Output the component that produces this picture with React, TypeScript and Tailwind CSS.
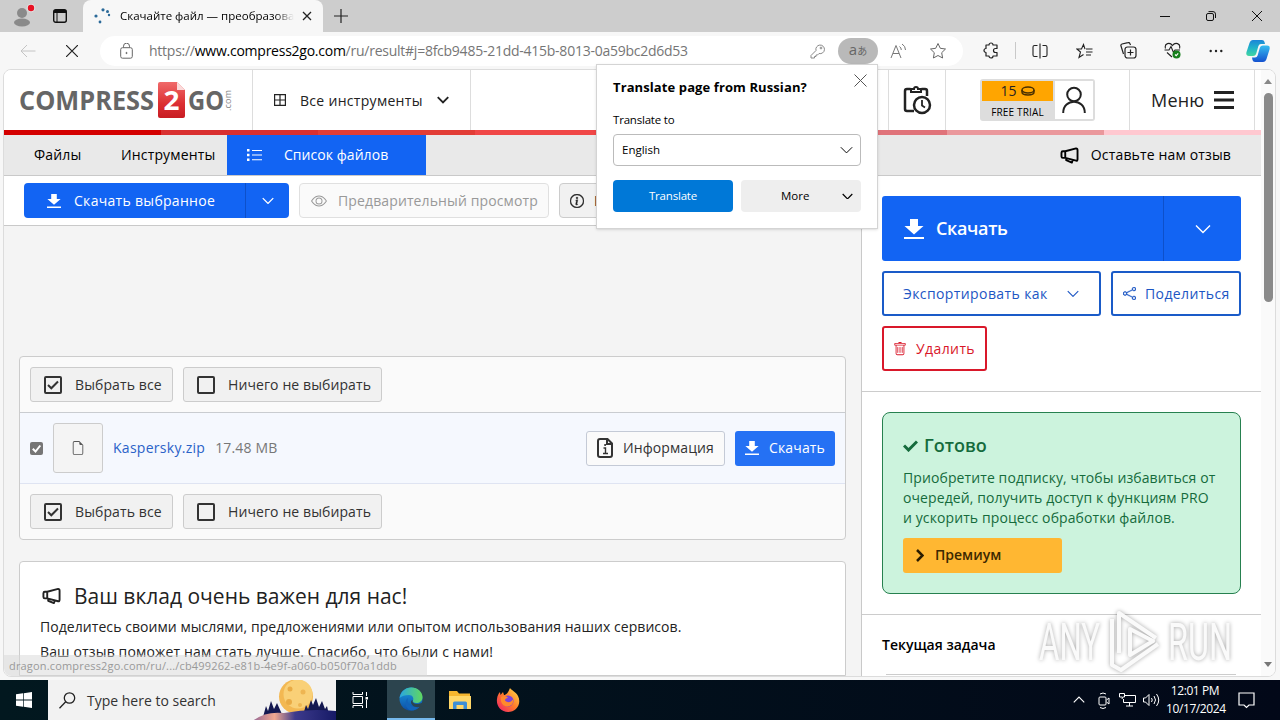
import React from 'react';
import { BsFileEarmark, BsShare, BsTrash, BsEye, BsInfoCircle } from 'react-icons/bs';

interface IconProps {
  className?: string;
}

const Chevron = ({ className }: IconProps) => (
  <svg viewBox="0 0 16 10" fill="none" stroke="currentColor" className={className}>
    <path d="M1 1.500 8 8.500 15 1.500" />
  </svg>
);

const Download = ({ className }: IconProps) => (
  <svg viewBox="0 0 20 20" fill="currentColor" className={className}>
    <path d="M6 0h8v7h5.500L10 15.500.5 7H6zM0 18h20v2.200H0z" />
  </svg>
);

const Megaphone = ({ className }: IconProps) => (
  <svg viewBox="0 0 20 18" fill="none" stroke="currentColor" strokeWidth="2" strokeLinejoin="round" className={className}>
    <path d="M5.500 4.500 17 1.500q1.500 0 1.500 2v9.500q0 1.800-1.500 1.500L5.500 11.500zM5.500 4.500H3Q1.500 4.500 1.500 6v4q0 1.500 1.500 1.500h2.500M6.500 12v2l6 2.500 1-2.800" />
  </svg>
);

const CheckSquare = ({ checked }: { checked: boolean }) => (
  <svg viewBox="0 0 18 18" fill="none" stroke="#333" strokeWidth="2" className="h-[18px] w-[18px] shrink-0">
    <rect x="1" y="1" width="16" height="16" rx="1" />
    {checked && <path d="m4 9 3.300 3.300L14 5.500" />}
  </svg>
);

const Logo = () => (
  <svg width="214" height="40" viewBox="0 0 214 40" fontFamily="Open Sans, sans-serif" fontWeight="700">
    <defs>
      <linearGradient id="doc" x2="0" y2="1">
        <stop offset="0" stopColor="#f06a6a" />
        <stop offset="0.6" stopColor="#dc2f33" />
        <stop offset="1" stopColor="#c81c22" />
      </linearGradient>
    </defs>
    <text x="-1" y="30" fontSize="27" fill="#666" textLength="135" lengthAdjust="spacingAndGlyphs">COMPRESS</text>
    <path d="M138 4q0-2 2-2h17l8 8v26q0 2-2 2h-23q-2 0-2-2z" fill="url(#doc)" />
    <path d="M157 2v8h8z" fill="#fbdada" />
    <text x="143.500" y="30" fontSize="27" fill="#fff" textLength="16" lengthAdjust="spacingAndGlyphs">2</text>
    <text x="168" y="30" fontSize="27" fill="#666" textLength="36" lengthAdjust="spacingAndGlyphs">GO</text>
    <text transform="translate(211 31) rotate(-90)" fontSize="9" fontWeight="400" fill="#888" textLength="21">.com</text>
  </svg>
);

const TabBar = () => (
  <div className="flex h-8 shrink-0 bg-[#cdcdcd]">
    <div className="flex w-[83px] items-center gap-[21px] pl-[13px]">
      <svg width="24" height="24" viewBox="0 0 24 24">
        <circle cx="9" cy="9" r="5" fill="#8a8a8a" />
        <ellipse cx="9" cy="18.500" rx="8" ry="4" fill="#8a8a8a" />
        <circle cx="18" cy="4" r="4.300" fill="#e2e2e2" />
        <circle cx="18" cy="4" r="3.200" fill="#e81123" />
      </svg>
      <svg width="14" height="14" viewBox="0 0 14 14" fill="none" stroke="#111" className="-ml-[5px]">
        <rect x=".7" y=".7" width="12.600" height="12.600" rx="2" strokeWidth="1.400" />
        <path d="M1 2.500h12" strokeWidth="3" />
        <path d="M4 3v10" />
      </svg>
    </div>
    <div className="flex w-[240px] items-center rounded-t-lg bg-[#f7f7f7] pl-[11px]">
      <svg width="17" height="17" viewBox="0 0 17 17" fill="#2b6a99">
        <circle cx="9" cy="1.800" r="1.600" />
        <circle cx="13.500" cy="3.500" r="1.500" />
        <circle cx="15" cy="7" r="1.200" />
        <circle cx="2" cy="8" r="1.600" />
        <circle cx="6" cy="14" r="1.400" />
      </svg>
      <div className="ml-[9px] w-[174px] overflow-hidden text-[11.500px] whitespace-nowrap text-black [mask-image:linear-gradient(to_right,black_155px,transparent_174px)]">
        Скачайте файл — преобразова
      </div>
      <svg width="10" height="10" viewBox="0 0 10 10" stroke="#222" strokeWidth="1.300" className="ml-2">
        <path d="m1 1 8 8M9 1 1 9" />
      </svg>
    </div>
    <div className="flex grow items-center pl-[11px]">
      <svg width="14" height="14" viewBox="0 0 14 14" stroke="#222" strokeWidth="1.200">
        <path d="M7 0v14M0 7h14" />
      </svg>
    </div>
    <div className="flex items-center gap-9 pr-[18px]">
      <svg width="10" height="10" stroke="#111">
        <path d="M0 5.500h10" />
      </svg>
      <svg width="10" height="10" viewBox="0 0 10 10" fill="none" stroke="#111">
        <rect x=".5" y="2.500" width="7" height="7" rx="1.500" />
        <path d="M2.500.6H7q2.500 0 2.500 2.500V7" />
      </svg>
      <svg width="10" height="10" viewBox="0 0 10 10" stroke="#111">
        <path d="m0 0 10 10M10 0 0 10" />
      </svg>
    </div>
  </div>
);

const AddressBar = () => (
  <div className="flex h-[37px] shrink-0 items-center bg-[#f7f7f7] pl-5">
    <svg width="16" height="14" viewBox="0 0 16 14" fill="none" stroke="#c4c4c4">
      <path d="M15.500 7H1M7 1 1 7l6 6" />
    </svg>
    <svg width="12" height="12" viewBox="0 0 12 12" stroke="#222" strokeWidth="1.200" className="ml-[30px]">
      <path d="m0 0 12 12M12 0 0 12" />
    </svg>
    <div className="ml-[22px] flex h-[30px] w-[863px] items-center rounded-full bg-white pl-5 text-[#767676]">
      <svg width="13" height="16" viewBox="0 0 13 16" fill="none" stroke="#666">
        <rect x=".7" y="4.700" width="11.600" height="10.500" rx="1.800" />
        <path d="M3.500 4.500V3.200a3 3 0 0 1 6 0v1.300" />
        <circle cx="6.500" cy="10" r=".6" fill="#666" />
      </svg>
      <div className="ml-4 w-[660px] text-[14px] tracking-[-0.250px] whitespace-nowrap">
        https://<span className="text-black">www.compress2go.com</span>/ru/result#j=8fcb9485-21dd-415b-8013-0a59bc2d6d53
      </div>
      <svg width="16" height="16" viewBox="0 0 16 16" fill="none" stroke="#888" className="ml-px">
        <path d="M6 7.500a4.300 4.300 0 1 1 3 3L7.500 12H6v1.500H4.500V15H1v-2.500z" />
        <circle cx="11" cy="5" r=".9" />
      </svg>
      <div className="ml-3 flex h-[26px] w-10 items-center justify-center rounded-full bg-[#b9b9b9] text-[#666]">
        <span className="pb-0.5 text-[15px] leading-none">a</span>
        <span className="font-['Noto_Sans_CJK_JP',sans-serif] text-[10px] leading-none">あ</span>
      </div>
      <svg width="17" height="16" viewBox="0 0 17 16" fill="none" stroke="#777" className="ml-3">
        <path d="m1 15 5-12.500L11 15M3 10.500h6M9.500 3.500q1.800 1.200 1.800 3.500M12 1q3.500 2 3.500 6" />
      </svg>
      <svg width="18" height="18" viewBox="0 0 18 18" fill="none" stroke="#666" strokeLinejoin="round" className="ml-[22px]">
        <path d="m9 1.500 2.300 4.800 5.200.7-3.800 3.700.9 5.300L9 13.500 4.400 16l.9-5.300L1.500 7l5.200-.7z" />
      </svg>
    </div>
    <div className="flex grow items-center text-[#222]">
      <svg width="17" height="17" viewBox="0 0 17 17" fill="none" stroke="currentColor" strokeWidth="1.200" strokeLinejoin="round" className="ml-5">
        <path d="M3 3h3a2 2 0 0 1 4 0h4v3.500h-1.500a2 2 0 0 0 0 4H14V14h-4a2 2 0 0 1-4 0H3v-3.500a2 2 0 0 1 0-4z" />
      </svg>
      <div className="ml-[15px] h-[17px] w-px bg-[#c9c9c9]" />
      <svg width="16" height="16" viewBox="0 0 16 16" fill="none" stroke="currentColor" strokeWidth="1.100" className="ml-4">
        <path d="M5.500 2.500H2.500Q1 2.500 1 4v8q0 1.500 1.500 1.500h3M8 .5v15M10.500 2.500h3Q15 2.500 15 4v8q0 1.500-1.500 1.500h-3" />
      </svg>
      <svg width="17" height="16" viewBox="0 0 17 16" fill="none" stroke="currentColor" strokeWidth="1.100" className="ml-7">
        <path d="M9 6.200 7.500 1.500 5.500 6H.8l3.700 3L3 14.500l4.500-3M10 6h6.500M10 9h6.500M10 12h5" />
      </svg>
      <svg width="17" height="17" viewBox="0 0 17 17" fill="none" stroke="currentColor" strokeWidth="1.200" className="ml-[27px]">
        <path d="M3.500 12 1 4q-.5-1.500 1-2L8 .7q1.500-.4 2 1L10.500 3" />
        <rect x="5" y="5" width="11" height="11" rx="2.500" />
        <path d="M10.500 7.500v6M7.500 10.500h6" />
      </svg>
      <svg width="17" height="17" viewBox="0 0 17 17" fill="none" stroke="currentColor" strokeWidth="1.100" className="ml-[27px]">
        <path d="M1.500 6.500C0 1 6 0 8.500 3.500 11 0 17 1 15.500 6.500M.5 8H5l2-3.500 2.500 6L11 8h5M3 10.500l5 4.500" />
        <circle cx="12.500" cy="12.500" r="4" fill="#16801c" stroke="none" />
        <path d="m11 12.500 1.200 1.200 2-2.400" stroke="#fff" />
      </svg>
      <svg width="14" height="4" viewBox="0 0 14 4" fill="currentColor" className="ml-7">
        <circle cx="1.700" cy="2" r="1.200" />
        <circle cx="7" cy="2" r="1.200" />
        <circle cx="12.300" cy="2" r="1.200" />
      </svg>
      <svg width="24" height="24" viewBox="0 0 24 24" className="ml-[23px]">
        <defs>
          <linearGradient id="cpA" x2="0" y2="1">
            <stop offset="0" stopColor="#1b85d8" />
            <stop offset="0.500" stopColor="#20b3c9" />
            <stop offset="1" stopColor="#43d6a0" />
          </linearGradient>
          <linearGradient id="cpB" x2="0" y2="1">
            <stop offset="0" stopColor="#35bdf0" />
            <stop offset="1" stopColor="#1552cf" />
          </linearGradient>
        </defs>
        <path d="M7 1h9q2 0 2.500 2L19 5h-4q-2 0-2.600 2l-2 7q-.7 3-3.400 3H3q-3.500 0-2.500-4L3.500 4Q4.500 1 7 1z" fill="url(#cpA)" />
        <path d="M17 23H9q-2 0-2.500-2L6 18.500h3q2 0 2.600-2l2-7Q14.300 6.500 17 6.500h4q3.500 0 2.500 4l-3 9.500q-1 3-3.500 3z" fill="url(#cpB)" />
      </svg>
    </div>
  </div>
);

const SiteHeader = () => (
  <div className="flex h-[60px] shrink-0 bg-white pr-1.5 text-[#222]">
    <div className="flex w-[249px] items-center border-r border-[#ddd] pl-4">
      <Logo />
    </div>
    <div className="flex w-[218px] items-center border-r border-[#ddd] pl-[21px] text-[14px] font-medium tracking-[0.300px]">
      <svg width="12" height="12" viewBox="0 0 12 12" fill="none" stroke="#222" strokeWidth="1.200">
        <path d="M.6.6h10.800v10.800H.6zM6 0v12M0 6h12" />
      </svg>
      <span className="ml-[14px] w-[124px] whitespace-nowrap">Все инструменты</span>
      <Chevron className="ml-[13px] w-3 stroke-[2.500]" />
    </div>
    <div className="grow border-r border-[#ddd]" />
    <div className="flex w-[57px] items-center justify-center border-r border-[#ddd]">
      <svg width="30" height="32" viewBox="0 0 30 32" fill="none" stroke="#222" strokeWidth="2.500">
        <path d="M8.500 5H5Q3 5 3 7v18q0 2 2 2h7M19.500 5H23q2 0 2 2v5" />
        <path d="M9 8V5h3a2 2 0 0 1 4 0h3v3z" strokeWidth="2" />
        <circle cx="20" cy="21" r="8" />
        <path d="M20 16v5.500l3 2" strokeWidth="1.800" />
      </svg>
    </div>
    <div className="flex w-[184px] items-center border-r border-[#ddd] pl-[34px]">
      <div className="flex h-[42px] w-[115px] rounded-[3px] border-2 border-[#ddd] bg-[#ddd]">
        <div className="w-[71px] text-center">
          <div className="flex h-5 items-center justify-center gap-1 bg-[#ffa500] text-[14px] leading-5">
            15
            <svg width="14" height="10" viewBox="0 0 14 10" fill="none" stroke="#4a3000" strokeWidth="1.500">
              <ellipse cx="7" cy="4" rx="6" ry="3" />
              <path d="M1 4v2c0 4 12 4 12 0V4" />
            </svg>
          </div>
          <div className="pt-px text-[10px] leading-5 font-medium tracking-[0.150px] whitespace-nowrap text-black">FREE TRIAL</div>
        </div>
        <div className="ml-0.5 flex grow items-center justify-center bg-white">
          <svg width="24" height="28" viewBox="0 0 24 28" fill="none" stroke="#222" strokeWidth="2">
            <circle cx="12" cy="8.500" r="6.800" />
            <path d="M1.200 27c0-15 21.600-15 21.600 0" />
          </svg>
        </div>
      </div>
    </div>
    <div className="flex w-[125px] items-center border-r border-[#ddd] pl-[21px]">
      <span className="w-[53px] text-[18px] font-medium tracking-[0.200px]">Меню</span>
      <svg width="20" height="18" className="ml-[10px]" fill="#222">
        <path d="M0 0h20v3H0zM0 7.500h20v3H0zM0 15h20v3H0z" />
      </svg>
    </div>
  </div>
);

const Strip = () => (
  <div className="flex h-[5px] shrink-0">
    <div className="flex-1 bg-[#d40000]" />
    <div className="flex-1 bg-[#d93030]" />
    <div className="flex-1 bg-[#e23d36]" />
    <div className="flex-1 bg-[#f04747]" />
    <div className="flex-1 bg-[#e06060]" />
    <div className="flex-1 bg-[#e0737a]" />
    <div className="flex-1 bg-[#ea989c]" />
    <div className="flex-1 bg-[#ffc8d0]" />
  </div>
);

const SiteNav = () => (
  <div className="flex h-[41px] shrink-0 items-stretch border-b border-[#c9c9c9] bg-[#e9e9e9] text-[14px] leading-10 tracking-[0.150px] text-black">
    <span className="w-[87px] pl-[30px]">Файлы</span>
    <span className="w-[136px] pl-[30px]">Инструменты</span>
    <span className="flex w-[199px] items-center bg-[#1264f3] pl-5 text-white">
      <svg width="15" height="12" viewBox="0 0 15 12" fill="#fff">
        <path d="M0 0h2.500v2.500H0zM0 4.700h2.500v2.500H0zM0 9.400h2.500v2.500H0zM5 1h10v1H5zM5 5.500h10v1H5zM5 10.300h10v1H5z" />
      </svg>
      <span className="ml-[22px] tracking-[0.050px] whitespace-nowrap">Список файлов</span>
    </span>
    <span className="flex grow items-center justify-end pr-[30px]">
      <Megaphone className="mr-3 h-[17px] w-[19px]" />
      Оставьте нам отзыв
    </span>
  </div>
);

const Toolbar = () => (
  <div className="flex h-[50px] items-center gap-2.5 border-b border-[#c9c9c9] bg-white pl-5 text-[14px]">
    <div className="flex h-[35px] w-[265px] overflow-hidden rounded bg-[#1264f3] text-white">
      <div className="flex w-[222px] items-center border-r border-[#0d50ca] pl-[23px]">
        <Download className="w-[14px]" />
        <span className="ml-[13px] font-medium tracking-[0.300px] whitespace-nowrap">Скачать выбранное</span>
      </div>
      <div className="flex grow items-center justify-center">
        <Chevron className="w-3 stroke-[1.800]" />
      </div>
    </div>
    <div className="flex h-[35px] w-[250px] items-center rounded border border-[#e0e0e0] bg-[#fafafa] pl-[11px] text-[#999]">
      <BsEye className="text-[16px]" />
      <span className="ml-[11px] tracking-[0.120px] whitespace-nowrap">Предварительный просмотр</span>
    </div>
    <div className="flex h-[35px] w-[138px] items-center rounded border border-[#ccc] bg-[#f1f1f1] pl-2.5 text-[#222]">
      <BsInfoCircle className="stroke-[0.500] text-[14px]" />
      <span className="ml-2.5">Информация</span>
    </div>
  </div>
);

const SelectRow = () => (
  <div className="flex h-[55px] items-center gap-2.5 pl-2.5 text-[14px] tracking-[0.100px] text-[#333]">
    <div className="flex h-[35px] w-[143px] items-center rounded-[3px] border border-[#ccc] bg-[#f1f1f1] pl-[13px]">
      <CheckSquare checked />
      <span className="ml-[13px] whitespace-nowrap">Выбрать все</span>
    </div>
    <div className="flex h-[35px] w-[199px] items-center rounded-[3px] border border-[#ccc] bg-[#f1f1f1] pl-[13px]">
      <CheckSquare checked={false} />
      <span className="ml-[13px] whitespace-nowrap">Ничего не выбирать</span>
    </div>
  </div>
);

const FileRow = () => (
  <div className="flex h-[72px] items-center border-t border-b border-t-[#c9ccd0] border-b-[#dfe4f2] bg-[#f5f8fe] pr-2.5 pl-2.5 text-[14px]">
    <svg width="13" height="13" viewBox="0 0 13 13">
      <rect width="13" height="13" rx="2" fill="#767676" />
      <path d="m2.800 6.800 2.700 2.700 4.800-6" fill="none" stroke="#fff" strokeWidth="2" />
    </svg>
    <div className="ml-2.5 flex h-[50px] w-[50px] items-center justify-center rounded-[3px] border border-[#ccc] bg-[#f4f4f4]">
      <BsFileEarmark className="text-[14px] text-[#555]" />
    </div>
    <span className="ml-2.5 pb-0.5 tracking-[0.280px] text-[#2a62c8]">Kaspersky.zip</span>
    <span className="ml-2.5 grow pb-0.5 tracking-[0.150px] text-[#777]">17.48 MB</span>
    <div className="flex h-[35px] w-[139px] items-center rounded-[3px] border border-[#c4cad6] bg-[#fafafa] pl-2.5 text-[#333]">
      <svg width="16" height="20" viewBox="0 0 16 20" fill="none" stroke="#333" strokeWidth="2">
        <path d="M3 1h7.500L15 5.500V17q0 2-2 2H3q-2 0-2-2V3q0-2 2-2zM10 1v5h5" />
        <path d="M6.500 10H8.500v5M6 15.500h5" strokeWidth="1.400" />
        <path d="M7.300 7h1.600" />
      </svg>
      <span className="ml-2.5 pb-0.5 tracking-[0.100px]">Информация</span>
    </div>
    <div className="ml-2.5 flex h-[35px] w-[100px] items-center rounded-[3px] bg-[#2571f4] pl-2.5 text-white">
      <Download className="w-[14px]" />
      <span className="ml-2.5 pb-0.5 tracking-[0.150px]">Скачать</span>
    </div>
  </div>
);

const SidePanel = () => (
  <div className="w-[400px] shrink-0 border-l border-[#c9c9c9] bg-white">
    <div className="h-[216px] border-b border-[#ccc] pt-5 pl-5">
      <div className="flex h-[65px] w-[359px] rounded-[3px] bg-[#1264f3] text-white">
        <div className="flex w-[282px] items-center border-r border-[#0d50ca] pl-[22px]">
          <Download className="w-5" />
          <span className="ml-3 text-[18px] font-semibold tracking-[-0.350px]">Скачать</span>
        </div>
        <div className="flex grow items-center justify-center">
          <Chevron className="w-4 stroke-[1.400]" />
        </div>
      </div>
      <div className="mt-2.5 flex gap-2.5 text-[14px] font-medium tracking-[0.400px] text-[#1c56c4]">
        <div className="flex h-[45px] w-[219px] items-center rounded-[3px] border-2 border-[#1a5bc8] pl-[19px]">
          <span className="w-[145px] whitespace-nowrap">Экспортировать как</span>
          <Chevron className="ml-[19px] w-3 stroke-[1.500]" />
        </div>
        <div className="flex h-[45px] w-[130px] items-center rounded-[3px] border-2 border-[#1a5bc8] pl-2.5">
          <BsShare className="stroke-[0.400] text-[13px]" />
          <span className="ml-[9px] whitespace-nowrap">Поделиться</span>
        </div>
      </div>
      <div className="mt-2.5 flex h-[45px] w-[105px] items-center rounded-[3px] border-2 border-[#d9182a] pl-[9px] text-[14px] font-medium tracking-[0.400px] text-[#d9182a]">
        <BsTrash className="text-[14px]" />
        <span className="ml-[9px]">Удалить</span>
      </div>
    </div>
    <div className="h-[223px] border-b border-[#ccc] pt-5 pl-5">
      <div className="h-[182px] w-[359px] rounded-lg border border-[#26804f] bg-[#ccf3dd] pt-[19px] pl-5 text-[#156b3c]">
        <div className="flex h-[27px] items-center text-[18px] font-semibold">
          <svg width="15" height="12" viewBox="0 0 15 12" fill="none" stroke="currentColor" strokeWidth="3" className="mr-1.5">
            <path d="m1 5.500 4.500 4.500L14 1.500" />
          </svg>
          Готово
        </div>
        <div className="mt-[9px] text-[14px] leading-5 tracking-[0.100px] whitespace-nowrap">
          <div>Приобретите подписку, чтобы избавиться от</div>
          <div>очередей, получить доступ к функциям PRO</div>
          <div>и ускорить процесс обработки файлов.</div>
        </div>
        <div className="mt-2.5 flex h-[35px] w-[159px] items-center rounded-[3px] bg-[#ffb732] pl-[13px] text-[14px] font-semibold text-[#3c2800]">
          <svg width="8" height="13" viewBox="0 0 8 13" fill="none" stroke="#2c1d00" strokeWidth="2.500">
            <path d="m1 1 5.500 5.500L1 12" />
          </svg>
          <span className="ml-[11px] pb-0.5">Премиум</span>
        </div>
      </div>
    </div>
    <div className="pt-5 pl-5 text-[14px] leading-5 font-semibold text-black">Текущая задача</div>
    <div className="mt-[19px] ml-6 h-px w-[350px] bg-[#ccc]" />
  </div>
);

const TranslatePopup = () => (
  <div className="absolute top-[64px] left-[596px] h-[165px] w-[282px] border border-[#d4d4d4] bg-white px-4 pt-[13px] text-[11.500px] text-black shadow-sm">
    <svg width="13" height="13" viewBox="0 0 13 13" stroke="#555" className="absolute top-[9px] right-[10px]">
      <path d="m.5.5 12 12M12.500.5l-12 12" />
    </svg>
    <div className="text-[13px] leading-[18px] font-bold tracking-[0.100px] whitespace-nowrap">Translate page from Russian?</div>
    <div className="mt-4 leading-4 tracking-[-0.200px]">Translate to</div>
    <div className="mt-[6px] flex h-8 w-[248px] items-center justify-between rounded-sm border border-[#bbb] pr-[7px] pl-2">
      English
      <Chevron className="w-[13px] stroke-[1.200]" />
    </div>
    <div className="mt-[14px] flex gap-2">
      <div className="flex h-8 w-[120px] items-center justify-center rounded-sm bg-[#0078d7] tracking-[-0.200px] text-white">Translate</div>
      <div className="flex h-8 w-[120px] items-center rounded-sm bg-[#eee] pr-2 pl-10">
        <span className="grow">More</span>
        <Chevron className="w-[11px] stroke-[1.800]" />
      </div>
    </div>
  </div>
);

const Watermark = () => (
  <svg
    width="200"
    height="68"
    viewBox="0 0 200 68"
    className="absolute top-[607px] left-[1036px] drop-shadow-[0_0_2px_rgba(0,0,0,0.35)]"
    fontFamily="Roboto, sans-serif"
    fontSize="51">
    <g fill="#fafafa">
      <text x="3" y="53" textLength="61" lengthAdjust="spacingAndGlyphs">ANY</text>
      <text x="132" y="53" textLength="64" lengthAdjust="spacingAndGlyphs">RUN</text>
    </g>
    <g fill="none" stroke="#fafafa" strokeWidth="4" strokeLinejoin="round">
      <path d="M83 46V6l37 25M94 22l23 12-23 14zM76 12v46l9 5 37-26" />
    </g>
  </svg>
);

const Taskbar = () => (
  <div className="flex h-10 shrink-0 items-stretch bg-[#02131f] bg-gradient-to-r from-[#02181f] to-[#020818] text-white">
    <div className="flex w-12 items-center justify-center">
      <svg width="16" height="16" viewBox="0 0 16 16" fill="#fff">
        <path d="M0 2.300 7 1.300v6.300H0zM7.700 1.200 16 0v7.600H7.700zM0 8.400h7v6.300l-7-1zM7.700 8.400H16V16l-8.300-1.200z" />
      </svg>
    </div>
    <div className="flex w-72 items-center bg-[#f2f2f2] pl-[11px]">
      <svg width="17" height="17" viewBox="0 0 17 17" fill="none" stroke="#222" strokeWidth="1.300">
        <circle cx="10.500" cy="6" r="5.200" />
        <path d="M6.700 9.800.5 16.300" />
      </svg>
      <span className="ml-[11px] grow text-[14px] text-[#333]">Type here to search</span>
      <svg width="84" height="40" viewBox="0 0 84 40">
        <defs>
          <linearGradient id="hill">
            <stop offset="0" stopColor="#9a6a94" />
            <stop offset="0.250" stopColor="#f0a890" />
            <stop offset="0.500" stopColor="#3d3a8c" />
            <stop offset="1" stopColor="#161a66" />
          </linearGradient>
        </defs>
        <circle cx="44" cy="16.500" r="17" fill="#f3b852" />
        <circle cx="46" cy="14" r="14.500" fill="#f9d077" />
        <circle cx="38" cy="9" r="2.500" fill="#e9ab45" />
        <circle cx="37" cy="22" r="3" fill="#e9ab45" />
        <circle cx="51" cy="12" r="2.500" fill="#eeb552" />
        <circle cx="48" cy="25" r="2" fill="#eeb552" />
        <path d="m11 37 3-11 2 5 3-10 3 8 3-6 4 9 2 5zM51 35l3-10 2 4 3-9 2 5 3-7 3 9 3-6 3 8 2-3 2 9z" fill="#141850" />
        <path d="M2 40q12-9 30-7 26-5 52-2v9z" fill="url(#hill)" />
      </svg>
    </div>
    <div className="flex w-[48px] items-center justify-center">
      <svg width="17" height="16" viewBox="0 0 17 16" fill="none" stroke="#fff">
        <path d="M1 0v2.500h9.500V0M1 4.500h9.500v7H1zM1 16v-2.500h9.500V16M14.500 0v4M14.500 8v8" />
        <path d="M13.500 5h2.500v2.500h-2.500z" fill="#fff" stroke="none" />
      </svg>
    </div>
    <div className="ml-[3px] flex w-12 items-center justify-center border-b-2 border-[#76b9ed] bg-[#2c444e]">
      <svg width="24" height="24" viewBox="0 0 24 24">
        <defs>
          <linearGradient id="edgeTop">
            <stop offset="0" stopColor="#2aa7e0" />
            <stop offset="1" stopColor="#60d85f" />
          </linearGradient>
          <linearGradient id="edgeBody" x2="0" y2="1">
            <stop offset="0" stopColor="#1b9de2" />
            <stop offset="1" stopColor="#0d4fa5" />
          </linearGradient>
        </defs>
        <circle cx="12" cy="12" r="11.500" fill="url(#edgeBody)" />
        <path d="M.6 11C2 4 7 .5 12.500.5c6.500 0 11 5 11 9.500 0 4-3 6-6 6s-4-1.500-3.500-2.500c1-2 0-5.500-4-5.500-4 0-7.500 1-9.400 3z" fill="url(#edgeTop)" />
        <path d="M9 11c-2 6 4 11 12 8-1.500 2.500-5 4.500-9 4.500C6 22 5 14 9 11z" fill="#1263b8" />
        <path d="M13.700 13c-.8 2 1 4 4.500 4 2 0 4-.6 5.800-2v4l-2.500.8C16 21.500 11.700 18 12 14.800c.2-1.200 1-1.800 1.700-1.800z" fill="#2c444e" />
      </svg>
    </div>
    <div className="flex w-[49px] items-center justify-center">
      <svg width="22" height="20" viewBox="0 0 22 20">
        <path d="M0 1h8l2 2.500h11V19H0z" fill="#f5b62f" />
        <path d="M0 6h22v13H0z" fill="#ffd768" />
        <path d="M4 19v-6q0-1.500 1.500-1.500h11q1.500 0 1.500 1.500v6h-3.500v-4h-7v4z" fill="#3d8fd6" />
      </svg>
    </div>
    <div className="flex w-12 items-center justify-center">
      <svg width="24" height="24" viewBox="0 0 24 24">
        <defs>
          <linearGradient id="fox" x1="1" x2="0" y2="1">
            <stop offset="0" stopColor="#ffe14a" />
            <stop offset="0.500" stopColor="#ff7a2a" />
            <stop offset="1" stopColor="#f0186e" />
          </linearGradient>
        </defs>
        <path d="M14 0c1 2 6 4 8 8 4 8-2 16-10 16C5 24 0 18 1 11c.3-3 1.500-5.500 3-7l.5 3L7 4l1 3c2 0 4-2 6-7z" fill="url(#fox)" />
        <circle cx="12" cy="13" r="5.500" fill="#7b42d8" />
        <path d="M5 9c3-2 6-1 7 1-2 0-3 1-3 2.500 3 3 6 1.500 8-1 1 4-2 7-6 7s-7-4-6-9.500z" fill="#ff8a2b" />
      </svg>
    </div>
    <div className="flex grow items-center justify-end text-[12px]">
      <Chevron className="w-3 rotate-180 stroke-[1.500]" />
      <svg width="12" height="17" viewBox="0 0 12 17" fill="none" stroke="#fff" className="ml-[13px]">
        <rect x="1" y="5" width="7" height="8" rx="1" />
        <path d="m8.500 8 2.500-2v6L8.500 10M2 2q3-2 6 0M2 15.500q3 2 6 0" />
      </svg>
      <svg width="17" height="14" viewBox="0 0 17 14" fill="none" stroke="#fff" className="ml-[9px]">
        <path d="M6 2.500h10.500v7H4.500V6M10.500 9.500v3.500M7 13h7M.5.5h5v3.500H3.500L3 6M.5.500V4H3" />
      </svg>
      <svg width="17" height="14" viewBox="0 0 17 14" fill="none" stroke="#fff" className="ml-[7px]">
        <path d="M.5 5h2L6 1.500v11L2.500 9h-2zM8.500 5q1.500 2 0 4M11 3q3 4 0 8M13.500 1q4.500 6 0 12" />
      </svg>
      <div className="ml-1.5 w-[58px] text-center leading-[18px] tracking-[-0.400px] whitespace-nowrap">
        <div>12:01 PM</div>
        <div>10/17/2024</div>
      </div>
      <svg width="17" height="17" viewBox="0 0 17 17" fill="none" stroke="#fff" strokeWidth="1.200" className="mr-[25px] ml-[14px]">
        <path d="M1 1h15v12h-5l-2.500 2.500L6 13H1z" />
      </svg>
    </div>
  </div>
);

const App = () => {
  return (
    <div className="relative flex h-[720px] w-[1280px] flex-col overflow-hidden bg-[#f7f7f7] font-['Open_Sans','Noto_Sans',sans-serif]">
      <TabBar />
      <AddressBar />
      <div className="mr-1 ml-[3px] flex h-[608px] shrink-0 overflow-hidden rounded-lg border border-[#dcdcdc] bg-white">
        <div className="flex w-[1257px] shrink-0 flex-col overflow-hidden">
          <SiteHeader />
          <Strip />
          <SiteNav />
          <div className="flex grow">
            <div className="w-[857px] shrink-0 bg-[#f4f4f4]">
              <Toolbar />
              <div className="mt-[130px] ml-[15px] h-[184px] w-[827px] rounded border border-[#ccc] bg-[#fafafa]">
                <SelectRow />
                <FileRow />
                <SelectRow />
              </div>
              <div className="mt-[21px] ml-[15px] h-[115px] w-[827px] rounded-t border border-[#ccc] bg-white pt-[18px] pl-5 text-[14px] leading-[25px] tracking-[0.060px] text-[#222]">
                <div className="mb-0.5 flex h-[32px] items-center text-[21px] tracking-normal">
                  <Megaphone className="ml-[2px] h-[18px] w-[19px]" />
                  <span className="ml-[13px] whitespace-nowrap">Ваш вклад очень важен для нас!</span>
                </div>
                <div>Поделитесь своими мыслями, предложениями или опытом использования наших сервисов.</div>
                <div className="tracking-[0.150px]">Ваш отзыв поможет нам стать лучше. Спасибо, что были с нами!</div>
              </div>
            </div>
            <SidePanel />
          </div>
        </div>
        <div className="flex grow flex-col items-center justify-between bg-[#fafafa] pt-[9px] pb-[9px]">
          <div className="flex flex-col items-center">
            <svg width="8" height="5" fill="#888">
              <path d="M0 5 4 0l4 5z" />
            </svg>
            <div className="mt-[9px] h-[209px] w-[9px] rounded-full bg-[#8a8a8a]" />
          </div>
          <svg width="8" height="5" fill="#777">
            <path d="M0 0h8L4 5z" />
          </svg>
        </div>
      </div>
      <div className="h-[3px] shrink-0" />
      <Taskbar />
      {/* link status, half faded in */}
      <div className="absolute top-[655px] left-1 h-[21px] w-[423px] rounded-bl-lg bg-[#d8d8d8]/50 pl-[5px] text-[11px] leading-[21px] tracking-[0.170px] whitespace-nowrap text-[#999]">
        dragon.compress2go.com/ru/.../cb499262-e81b-4e9f-a060-b050f70a1ddb
      </div>
      <TranslatePopup />
      <Watermark />
    </div>
  );
};
export default App;
